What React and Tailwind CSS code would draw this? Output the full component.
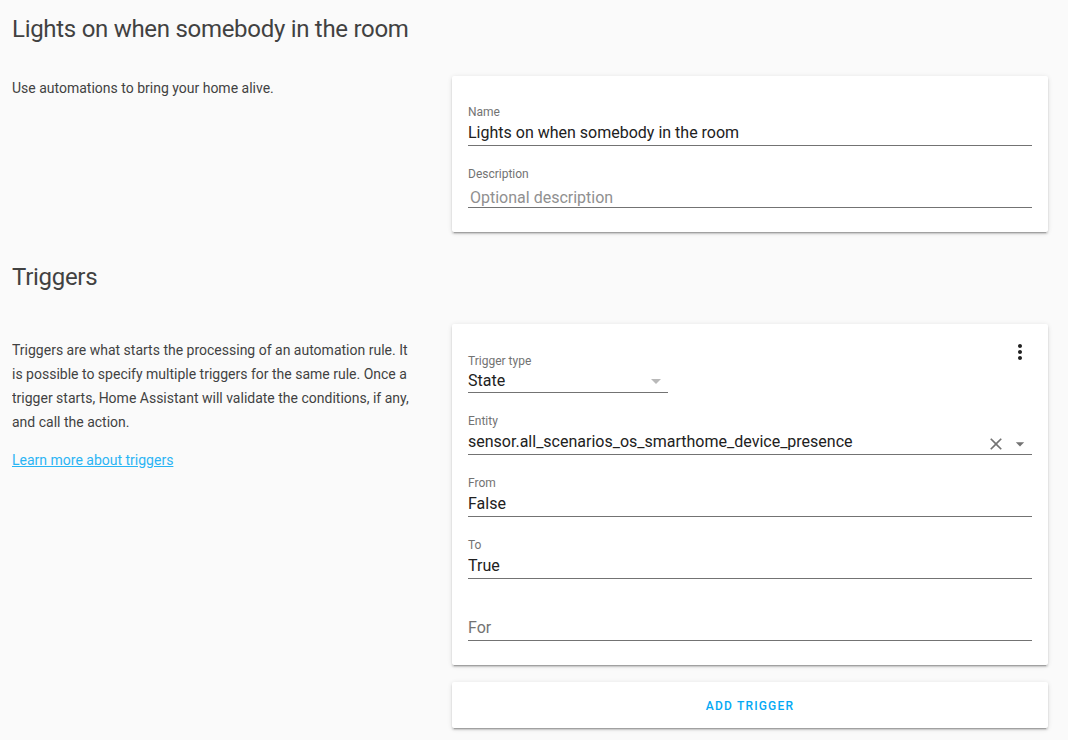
import { useState } from "react";

function Card({ children }) {
  return (
    <div className="rounded-xs bg-white shadow-[0_2px_2px_0_rgba(0,0,0,0.14),0_1px_5px_0_rgba(0,0,0,0.12),0_3px_1px_-2px_rgba(0,0,0,0.2)]">
      {children}
    </div>
  );
}

function Section({ title, intro, children }) {
  return (
    <section>
      <h1 className="text-2xl leading-8 tracking-[-0.012em] text-[#212121] opacity-85">{title}</h1>
      <div className="mt-[31px] flex gap-10">
        <div className="w-[400px] shrink-0 text-sm leading-6 text-[#212121] opacity-85">{intro}</div>
        <div className="flex min-w-0 flex-1 flex-col gap-[17px]">{children}</div>
      </div>
    </section>
  );
}

function Field({ id, label, children }) {
  return (
    <div className="py-2">
      <label htmlFor={id} className="block pt-[3px] text-xs leading-[18px] text-[#737373]">
        {label}
      </label>
      <div className="flex h-[25px] items-start border-b border-[#737373]">{children}</div>
    </div>
  );
}

const inputClass = "h-6 min-w-0 flex-1 bg-transparent text-base leading-6 text-[#212121] outline-none";

function TextField({ id, label, initial }) {
  const [value, setValue] = useState(initial);
  return (
    <Field id={id} label={label}>
      <input id={id} className={inputClass} value={value} onChange={(e) => setValue(e.target.value)} />
    </Field>
  );
}

function Icon({ d, className }) {
  return (
    <svg viewBox="0 0 24 24" fill="currentColor" aria-hidden="true" className={className}>
      <path d={d} />
    </svg>
  );
}

const CLOSE = "M19 6.41L17.59 5 12 10.59 6.41 5 5 6.41 10.59 12 5 17.59 6.41 19 12 13.41 17.59 19 19 17.59 13.41 12z";
const ARROW = "M7 10l5 5 5-5z";
const DOTS =
  "M12 8c1.1 0 2-.9 2-2s-.9-2-2-2-2 .9-2 2 .9 2 2 2zm0 2c-1.1 0-2 .9-2 2s.9 2 2 2 2-.9 2-2-.9-2-2-2zm0 6c-1.1 0-2 .9-2 2s.9 2 2 2 2-.9 2-2-.9-2-2-2z";

export default function App() {
  const [entity, setEntity] = useState("sensor.all_scenarios_os_smarthome_device_presence");
  return (
    <main className="flex min-h-screen flex-col gap-[29px] bg-[#fafafa] pt-[13px] pr-5 pb-3 pl-3 font-[Roboto,sans-serif]">
      <Section title="Lights on when somebody in the room" intro={<p>Use automations to bring your home alive.</p>}>
        <Card>
          <div className="p-4">
            <TextField id="name" label="Name" initial="Lights on when somebody in the room" />
            <Field id="description" label="Description">
              <input
                id="description"
                placeholder="Optional description"
                className="h-6 min-w-0 flex-1 bg-transparent pt-1 pl-0.5 text-base leading-5 text-[#212121] outline-none placeholder:text-[#909090]"
              />
            </Field>
          </div>
        </Card>
      </Section>

      <Section
        title="Triggers"
        intro={
          <div className="flex flex-col gap-3.5 pt-3.5">
            <p>
              Triggers are what starts the processing of an automation rule. It is possible to specify multiple
              triggers for the same rule. Once a trigger starts, Home Assistant will validate the conditions, if any,
              and call the action.
            </p>
            <a href="#triggers" className="self-start text-[#03a9f4] underline">
              Learn more about triggers
            </a>
          </div>
        }
      >
        <Card>
          <div className="p-4">
            <div className="flex items-start justify-between">
              <div className="w-[200px] pt-[13px] pb-2">
                <label htmlFor="type" className="block text-xs leading-4 text-[#737373]">
                  Trigger type
                </label>
                <div className="grid h-6 items-start border-b border-[#737373]">
                  <select
                    id="type"
                    defaultValue="State"
                    className="col-start-1 row-start-1 h-6 w-full appearance-none bg-transparent text-base leading-6 text-[#212121] outline-none"
                  >
                    <option>State</option>
                  </select>
                  <Icon
                    d={ARROW}
                    className="pointer-events-none col-start-1 row-start-1 size-6 justify-self-end text-[#b9b9b9]"
                  />
                </div>
              </div>
              <button type="button" aria-label="More options" className="flex w-6 justify-center text-[#212121]">
                <Icon d={DOTS} className="size-6" />
              </button>
            </div>

            <Field id="entity" label="Entity">
              <input id="entity" className={inputClass} value={entity} onChange={(e) => setEntity(e.target.value)} />
              <div className="flex pt-0.5 text-[#737373]">
                <button
                  type="button"
                  aria-label="Clear"
                  onClick={() => setEntity("")}
                  className="flex size-6 items-center justify-center"
                >
                  <Icon d={CLOSE} className="size-5" />
                </button>
                <button type="button" aria-label="Show entities" className="flex size-6 items-center justify-center">
                  <Icon d={ARROW} className="size-5" />
                </button>
              </div>
            </Field>
            <TextField id="from" label="From" initial="False" />
            <TextField id="to" label="To" initial="True" />
            <div className="pt-[29px] pb-2">
              <div className="flex h-[25px] items-start gap-2 border-b border-[#737373]">
                <label htmlFor="for" className="text-base leading-6 text-[#737373]">
                  For
                </label>
                <input id="for" className={inputClass} />
              </div>
            </div>
          </div>
        </Card>
        <Card>
          <button
            type="button"
            className="flex h-[46px] w-full items-center justify-center pt-0.5 text-xs font-medium tracking-widest text-[#03a9f4] uppercase"
          >
            Add trigger
          </button>
        </Card>
      </Section>
    </main>
  );
}
